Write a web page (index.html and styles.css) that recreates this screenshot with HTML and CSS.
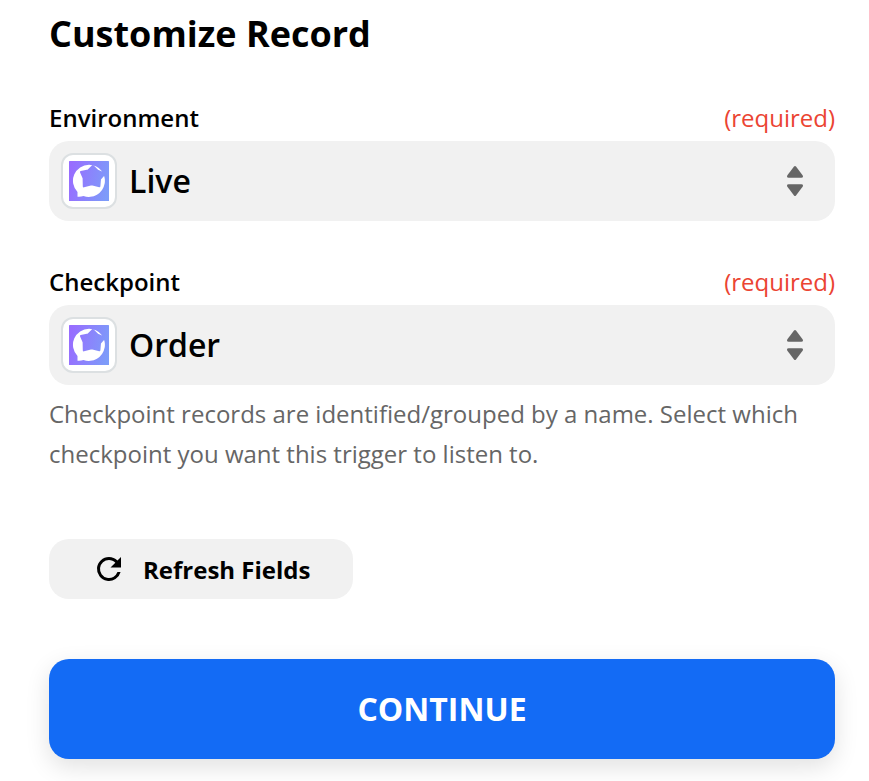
FILE: index.html
```
<!DOCTYPE html>
<html lang="en">
<head>
    <meta charset="UTF-8">
    <meta name="viewport" content="width=device-width, initial-scale=1.0">
    <title>Customize Record</title>
    <link rel="stylesheet" href="styles.css">
</head>
<body>
    <svg width="0" height="0" class="symbols">
        <defs>
            <linearGradient id="logo-bg" gradientUnits="userSpaceOnUse" x1="0" y1="16" x2="40" y2="24">
                <stop offset="0" stop-color="#986dff"/>
                <stop offset="1" stop-color="#7d9cf9"/>
            </linearGradient>
        </defs>
        <symbol id="logo" viewBox="0 0 40 40">
            <rect width="40" height="40" rx="0.5" fill="url(#logo-bg)"/>
            <path fill="#fff" d="M20 3.700a16.100 16.100 0 1 1-5.500 31.300C12.600 35.700 10.600 35.900 8.500 35.700V31A16.100 16.100 0 0 1 20 3.700z"/>
            <path fill="url(#logo-bg)" stroke="url(#logo-bg)" stroke-width="2" stroke-linejoin="round" d="M23.800 5L28.600 9.800 35.800 12.600 31 18.200 30.400 25.200 22.700 23.300 14.800 25.400 14.600 17 12 11 19.200 9.500z"/>
        </symbol>
        <symbol id="arrows" viewBox="0 0 16 30">
            <path d="M7 .5q1-1 2 0l6.600 8.700q1.200 2.600-1.300 2.600H1.700q-2.500 0-1.300-2.600z"/>
            <path d="M7 29.500q1 1 2 0l6.600-8.700q1.200-2.600-1.300-2.600H1.700q-2.500 0-1.300 2.600z"/>
        </symbol>
    </svg>

    <div class="panel">
        <h1>Customize Record</h1>

        <div class="field">
            <div class="field-head">
                <span class="label">Environment</span>
                <span class="required">(required)</span>
            </div>
            <div class="select">
                <span class="logo"><svg><use href="#logo"/></svg></span>
                <span class="value">Live</span>
                <svg class="arrows"><use href="#arrows"/></svg>
            </div>
        </div>

        <div class="field">
            <div class="field-head">
                <span class="label">Checkpoint</span>
                <span class="required">(required)</span>
            </div>
            <div class="select">
                <span class="logo"><svg><use href="#logo"/></svg></span>
                <span class="value">Order</span>
                <svg class="arrows"><use href="#arrows"/></svg>
            </div>
            <p class="help">Checkpoint records are identified/grouped by a name. Select which checkpoint you want this trigger to listen to.</p>
        </div>

        <button class="refresh">
            <svg viewBox="0 0 24 24"><path d="M17.650 6.350A7.960 7.960 0 0 0 12 4a8 8 0 1 0 7.730 10h-2.080A6 6 0 1 1 12 6c1.660 0 3.140.69 4.220 1.780L13 11h7V4z"/></svg>
            Refresh Fields
        </button>

        <button class="continue">CONTINUE</button>
    </div>
</body>
</html>
```
FILE: styles.css
```
* {
    box-sizing: border-box;
}

body {
    margin: 0;
    height: 781px;
    overflow: hidden;
    background-color: #fff;
    color: #000;
    font-family: "Open Sans", sans-serif;
}

.symbols {
    position: absolute;
}

.panel {
    padding: 9px 34px 0 49px;
}

h1 {
    margin: 0 0 44px;
    font-size: 36px;
    font-weight: 700;
    line-height: 50px;
}

.field {
    margin-bottom: 46px;
}

.field-head {
    display: flex;
    justify-content: space-between;
    height: 38px;
    font-size: 24px;
    line-height: 30px;
}

.label {
    font-weight: 600;
}

.required {
    color: #eb4432;
}

.select {
    display: flex;
    align-items: center;
    height: 80px;
    padding: 0 32px 0 12px;
    background-color: #f1f1f1;
    border-radius: 20px;
}

.logo {
    width: 56px;
    height: 56px;
    padding: 6px;
    background-color: #fff;
    border: 2px solid #dce0e2;
    border-radius: 12px;
}

.logo svg {
    display: block;
    width: 40px;
    height: 40px;
}

.value {
    flex: 1;
    margin-left: 12px;
    padding-bottom: 2px;
    font-size: 32px;
    font-weight: 600;
}

.arrows {
    width: 16px;
    height: 30px;
    fill: #666;
}

.help {
    margin: 9px 0 0;
    color: #666;
    font-size: 24px;
    line-height: 40px;
}

button {
    display: flex;
    align-items: center;
    border: none;
    font-family: inherit;
    font-weight: 700;
    cursor: pointer;
}

.refresh {
    width: 304px;
    height: 60px;
    margin: 65px 0 60px;
    padding: 0 0 0 42px;
    background-color: #f1f1f1;
    border-radius: 20px;
    color: #000;
    font-size: 24px;
}

.refresh svg {
    width: 36px;
    height: 36px;
    margin-right: 16px;
}

.continue {
    justify-content: center;
    width: 100%;
    height: 100px;
    padding: 0 0 2px;
    background-color: #136bf5;
    border-radius: 20px;
    box-shadow: 0 8px 24px rgba(0, 0, 0, 0.12);
    color: #fff;
    font-size: 32px;
}
```
